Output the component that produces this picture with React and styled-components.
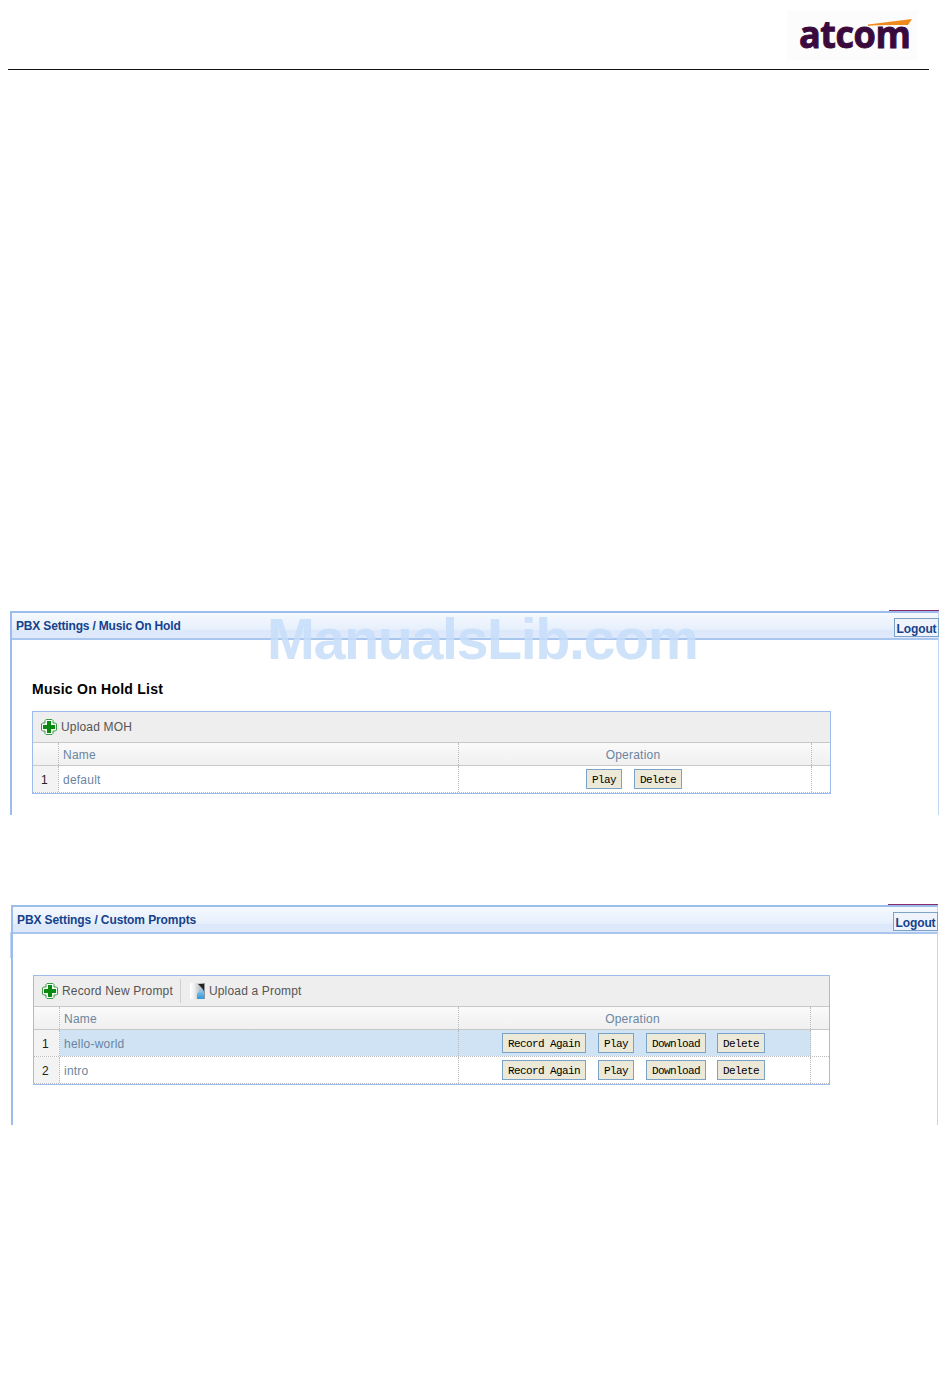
import React from "react";
import styled, { createGlobalStyle } from "styled-components";

const Global = createGlobalStyle`
  html, body { margin: 0; padding: 0; background: #fff; }
  body { font-family: "Liberation Sans", Arial, sans-serif; }
`;

const Page = styled.div`
  position: relative;
  width: 950px;
  height: 1387px;
  overflow: hidden;
`;

const Header = styled.header`
  display: flex;
  justify-content: flex-end;
  width: 921px;
  height: 69px;
  margin-left: 8px;
  border-bottom: 1px solid #111;
`;

const Logo = styled.div`
  position: relative;
  width: 131px;
  height: 50px;
  margin: 10px 11px 0 0;
  background: #fdfcfd;
`;

const LogoWord = styled.span`
  position: absolute;
  left: 12px;
  top: -1px;
  font: 700 37px/50px "Open Sans", sans-serif;
  letter-spacing: -0.5px;
  color: #3b0a3c;
  -webkit-text-stroke: 0.9px #3b0a3c;
  transform: scaleX(0.975);
  transform-origin: left center;
`;

const Swoosh = styled.svg`
  position: absolute;
  left: 80px;
  top: 9px;
`;

const Panel = styled.section`
  position: relative;
  box-sizing: border-box;
  width: ${(p) => p.$w}px;
  height: ${(p) => p.$h}px;
  margin-top: ${(p) => p.$top}px;
  margin-left: ${(p) => p.$left}px;
  border-top: 2px solid #9cbdec;
  border-left: 2px solid #9cbdec;
  border-right: 1px solid #c2d6f3;
`;

const Accent = styled.div`
  position: absolute;
  top: -3px;
  right: -1px;
  width: 50px;
  height: 1px;
  background: #8a2a6a;
`;

const Stub = styled.div`
  position: absolute;
  left: -3px;
  top: 25px;
  width: 1px;
  height: 26px;
  background: #c2d6f3;
`;

const TitleBar = styled.div`
  box-sizing: border-box;
  display: flex;
  align-items: flex-start;
  justify-content: space-between;
  height: 27px;
  border-bottom: 2px solid #a9c6ef;
  background: linear-gradient(#f5f9fe 0, #e6effc 17px, #dce8fb 17px, #dfe9fb 25px);
`;

const Crumb = styled.div`
  padding: 6px 0 0 ${(p) => p.$pad}px;
  font-size: 12px;
  line-height: 14px;
  font-weight: 700;
  letter-spacing: ${(p) => p.$track}px;
  color: #15428b;
`;

const Logout = styled.button`
  box-sizing: border-box;
  width: 45px;
  height: 19px;
  margin: 5px -1px 0 0;
  padding: 3px 0 0;
  border: 1px solid #7ba2c7;
  background: #eef3fc;
  font: 700 12px/14px "Liberation Sans", sans-serif;
  letter-spacing: -0.1px;
  color: #15428b;
`;

const Heading = styled.h2`
  margin: 41px 0 14px 20px;
  font-size: 14px;
  line-height: 16px;
  font-weight: 700;
  letter-spacing: 0.24px;
  color: #000;
`;

const Grid = styled.div`
  box-sizing: border-box;
  width: ${(p) => p.$w}px;
  margin-left: ${(p) => p.$left}px;
  margin-top: ${(p) => p.$top || 0}px;
  border: 1px solid #9cbdec;
  font-size: 12px;
`;

const Toolbar = styled.div`
  box-sizing: border-box;
  display: flex;
  align-items: center;
  height: 31px;
  padding-left: 8px;
  background: #eeeeee;
  border-bottom: 1px solid #c8c8c8;
`;

const ToolItem = styled.div`
  display: flex;
  align-items: center;
  gap: 4px;
  color: #555;
  font-size: 12px;
  letter-spacing: 0.17px;
`;

const ToolSep = styled.div`
  width: 1px;
  height: 24px;
  margin: 0 9px 0 7px;
  background: #d0d0d0;
`;

const Row = styled.div`
  box-sizing: border-box;
  display: grid;
  grid-template-columns: ${(p) => p.$cols};
  height: ${(p) => p.$h}px;
  border-bottom: ${(p) => p.$line};
`;

const HeadRow = styled(Row)`
  background: linear-gradient(#fafafa, #f0f0f0);
`;

const Cell = styled.div`
  box-sizing: border-box;
  display: flex;
  align-items: center;
  border-right: 1px dotted #bbb;
  color: #6a859f;
  font-size: 12px;
  letter-spacing: 0.22px;
  padding: 1px 0 0 4px;
  background: ${(p) => (p.$on ? "#cfe3f5" : "transparent")};
`;

const IndexCell = styled(Cell)`
  justify-content: center;
  padding: 1px 2px 0 0;
  color: #222;
  background: ${(p) => (p.$head ? "transparent" : "#f3f3f3")};
`;

const OpsHead = styled(Cell)`
  justify-content: center;
  padding: 1px 4px 0 0;
`;

const OpsCell = styled(Cell)`
  align-items: flex-start;
  justify-content: center;
  padding: 3px 2px 0 0;
  gap: ${(p) => p.$gap}px;
`;

const EndCell = styled.div``;

const OpButton = styled.button`
  box-sizing: border-box;
  height: 20px;
  margin-left: ${(p) => (p.$tight ? -1 : 0)}px;
  padding: 2px 5px 0;
  border: 1px solid #7ba2c7;
  background: #ece9d8;
  color: #000;
  font: 400 11px/16px "Liberation Mono", "Courier New", monospace;
  letter-spacing: -0.6px;
  white-space: nowrap;
`;

const Watermark = styled.div`
  position: absolute;
  left: 267px;
  top: 606px;
  font: 700 57.5px/66px "Liberation Sans", sans-serif;
  letter-spacing: -1.43px;
  color: rgba(198, 221, 249, 0.86);
  white-space: nowrap;
`;

const Plus = () => (
  <svg width="16" height="16" viewBox="0 0 16 16">
    <path d="M5 .5h6l1 1V4h2.500l1 1v6l-1 1H12v2.500l-1 1H5l-1-1V12H1.500l-1-1V5l1-1H4V1.500z" fill="#f4fbf4" stroke="#3d9a48" />
    <path d="M6 2h4v4h4v4h-4v4H6v-4H2V6h4z" fill="#0a8a10" />
  </svg>
);

const UploadIcon = () => (
  <svg width="15" height="16" viewBox="0 0 15 16">
    <defs>
      <linearGradient id="docFill" x1="0" y1="0" x2="1" y2="0">
        <stop offset="0" stopColor="#ffffff" />
        <stop offset="0.25" stopColor="#f2f2f2" />
        <stop offset="0.7" stopColor="#b9bdc1" />
        <stop offset="1" stopColor="#8d9296" />
      </linearGradient>
      <linearGradient id="docBlue" x1="0" y1="0" x2="0" y2="1">
        <stop offset="0" stopColor="#a9d4ee" />
        <stop offset="1" stopColor="#2d98dc" />
      </linearGradient>
    </defs>
    <path d="M0 0h15v16H0z" fill="url(#docFill)" />
    <path d="M8 1h6v7l-2-3-2-2z" fill="#222" />
    <path d="M7 16v-5l4-6 3 5v6z" fill="url(#docBlue)" />
  </svg>
);

const cols1 = "26px 400px 353px 1fr";
const cols2 = "26px 399px 352px 1fr";

export default function App() {
  return (
    <Page>
      <Global />
      <Header>
        <Logo>
          <LogoWord>atcom</LogoWord>
          <Swoosh width="46" height="10" viewBox="0 0 46 10">
            <path d="M1 5.500 45 0 41 6 24 6Q10 6 1 7z" fill="#ef8a1d" />
          </Swoosh>
        </Logo>
      </Header>

      <Panel $w={929} $h={204} $top={541} $left={10}>
        <Accent />
        <TitleBar>
          <Crumb $pad={4} $track={-0.17}>PBX Settings / Music On Hold</Crumb>
          <Logout>Logout</Logout>
        </TitleBar>
        <Heading>Music On Hold List</Heading>
        <Grid $w={799} $left={20}>
          <Toolbar>
            <ToolItem><Plus />Upload MOH</ToolItem>
          </Toolbar>
          <HeadRow $cols={cols1} $h={23} $line="1px solid #c8c8c8">
            <IndexCell $head />
            <Cell>Name</Cell>
            <OpsHead>Operation</OpsHead>
            <EndCell />
          </HeadRow>
          <Row $cols={cols1} $h={27} $line="1px dotted #bbb">
            <IndexCell>1</IndexCell>
            <Cell>default</Cell>
            <OpsCell $gap={12}>
              <OpButton>Play</OpButton>
              <OpButton>Delete</OpButton>
            </OpsCell>
            <EndCell />
          </Row>
        </Grid>
      </Panel>

      <Panel $w={927} $h={220} $top={90} $left={11}>
        <Accent />
        <Stub />
        <TitleBar>
          <Crumb $pad={4} $track={-0.1}>PBX Settings / Custom Prompts</Crumb>
          <Logout>Logout</Logout>
        </TitleBar>
        <Grid $w={797} $left={20} $top={41}>
          <Toolbar>
            <ToolItem><Plus />Record New Prompt</ToolItem>
            <ToolSep />
            <ToolItem><UploadIcon />Upload a Prompt</ToolItem>
          </Toolbar>
          <HeadRow $cols={cols2} $h={23} $line="1px solid #c8c8c8">
            <IndexCell $head />
            <Cell>Name</Cell>
            <OpsHead>Operation</OpsHead>
            <EndCell />
          </HeadRow>
          {[["1", "hello-world", true], ["2", "intro", false]].map(([n, name, on]) => (
            <Row key={n} $cols={cols2} $h={27} $line="1px dotted #bbb">
              <IndexCell>{n}</IndexCell>
              <Cell $on={on}>{name}</Cell>
              <OpsCell $on={on} $gap={12}>
                <OpButton>Record Again</OpButton>
                <OpButton>Play</OpButton>
                <OpButton>Download</OpButton>
                <OpButton $tight>Delete</OpButton>
              </OpsCell>
              <EndCell />
            </Row>
          ))}
        </Grid>
      </Panel>

      <Watermark>ManualsLib.com</Watermark>
    </Page>
  );
}
